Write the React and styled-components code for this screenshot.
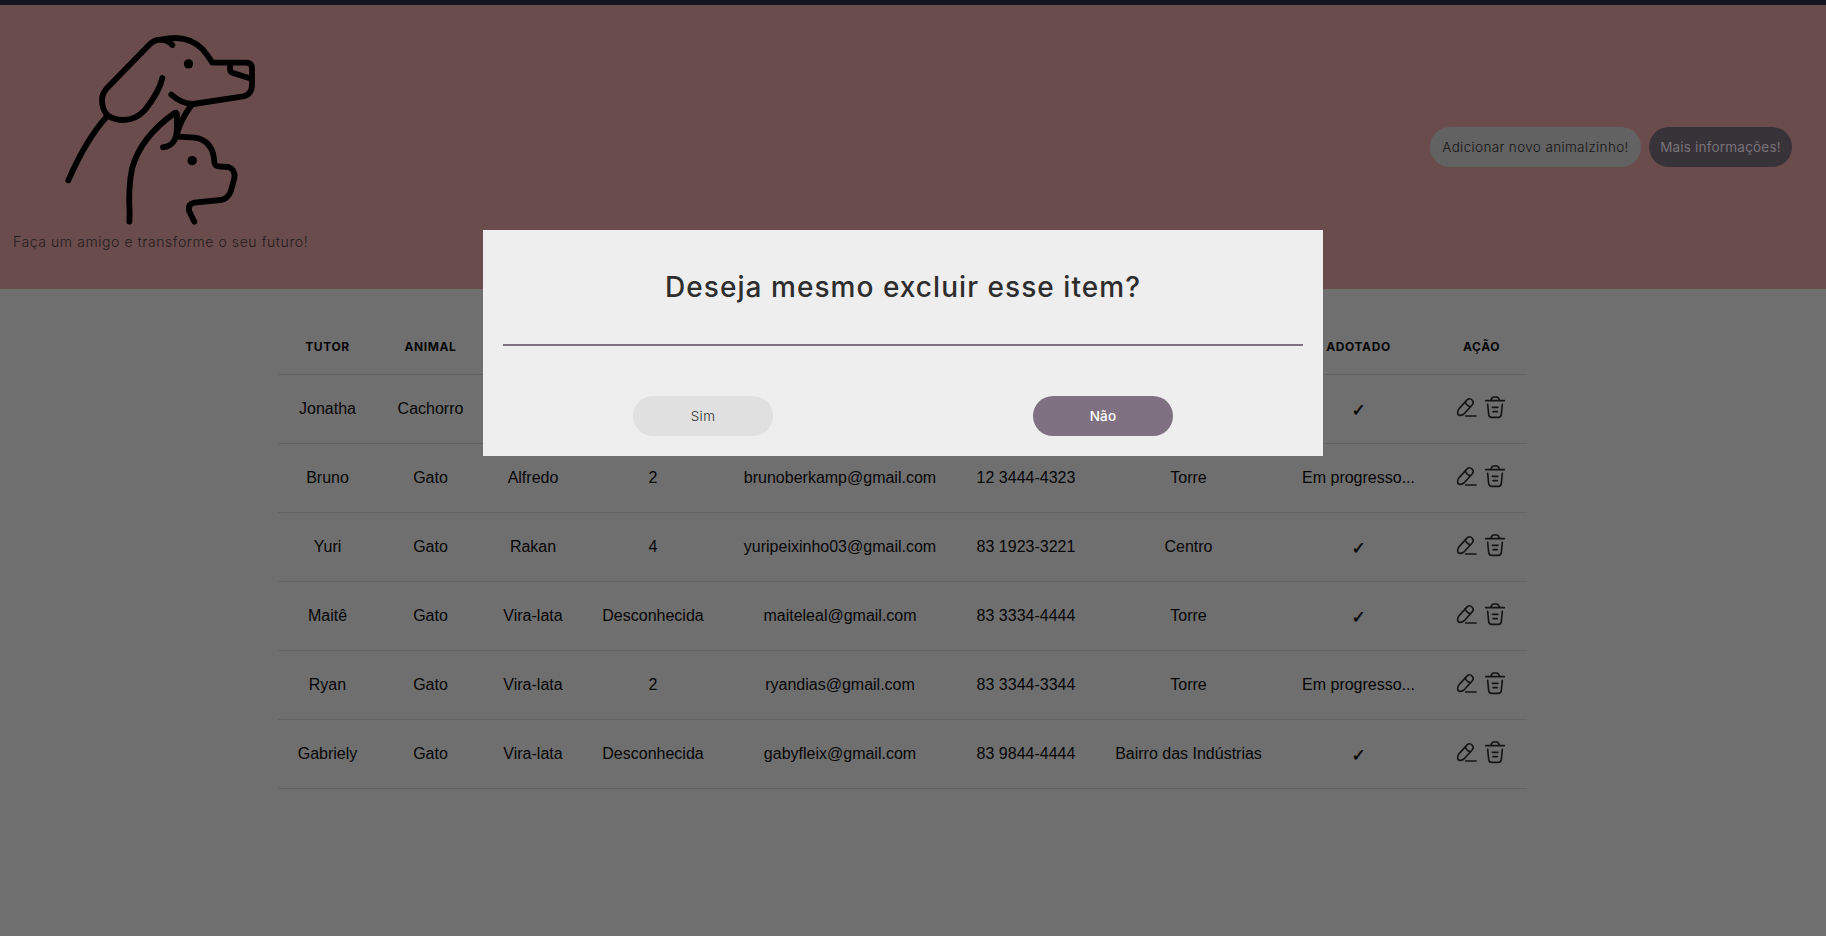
import React from "react";
import styled, { createGlobalStyle } from "styled-components";

const GlobalStyle = createGlobalStyle`
  * { box-sizing: border-box; }
  body { margin: 0; background: #6f6f6f; overflow: hidden; }
`;

const display = `Inter, "Liberation Sans", sans-serif`;

const Page = styled.div`
  min-height: 936px;
  background: #6f6f6f;
  border-top: 5px solid #141320;
`;

const Header = styled.header`
  display: flex;
  align-items: center;
  justify-content: space-between;
  height: 284px;
  padding: 0 34px 0 13px;
  background: #6b4c4c;
`;

const Brand = styled.div`
  align-self: flex-start;
  display: flex;
  flex-direction: column;
  padding-top: 25px;
`;

const Logo = styled.svg`
  width: 213px;
  height: 200px;
  margin-left: 37px;
  fill: none;
  stroke: #000;
  stroke-width: 17.5;
  stroke-linecap: round;
  stroke-linejoin: round;
`;

const Slogan = styled.p`
  margin: 2px 0 0;
  font: 300 14px/20px ${display};
  letter-spacing: 0.57px;
  color: #241b1d;
  white-space: nowrap;
`;

const HeaderActions = styled.div`
  display: flex;
  gap: 8px;
`;

const Button = styled.button`
  width: ${(p) => p.$width}px;
  height: 40px;
  padding: 0;
  border: 0;
  border-radius: 20px;
  background: ${(p) => p.$bg};
  color: ${(p) => p.$color};
  font: ${(p) => p.$weight || 400} 13.5px/40px ${display};
  letter-spacing: ${(p) => p.$spacing || 0}px;
  white-space: nowrap;
`;

const Table = styled.table`
  width: 1249px;
  margin: 31px 0 0 278px;
  table-layout: fixed;
  border-collapse: separate;
  border-spacing: 0;
`;

const HeadCell = styled.th`
  height: 55px;
  padding: 0;
  border-bottom: 1px solid #636363;
  font: 700 12px/16px ${display};
  letter-spacing: 0.6px;
  color: #060606;
`;

const Cell = styled.td`
  height: 69px;
  padding: 0 0 1px;
  border-bottom: 1px solid #636363;
  text-align: center;
  white-space: nowrap;
  font: 16px/20px "Liberation Sans", Arial, sans-serif;
  color: #060606;
`;

const Check = styled.span`
  position: relative;
  top: 2px;
  font: 17px/20px "DejaVu Sans", sans-serif;
  -webkit-text-stroke: 0.5px #060606;
`;

const RowActions = styled.div`
  display: flex;
  justify-content: center;
  gap: 6px;
  padding: 0 2px 3px 0;
`;

const Icon = styled.svg`
  width: 22px;
  height: 24px;
  fill: none;
  stroke: #141414;
  stroke-width: 4.8;
  stroke-linecap: round;
  stroke-linejoin: round;
`;

const Modal = styled.section`
  position: fixed;
  top: 230px;
  left: 483px;
  width: 840px;
  height: 226px;
  padding: 0 20px 20px;
  background: #eeeeee;
`;

const ModalTitle = styled.h2`
  height: 116px;
  margin: 0;
  border-bottom: 2px solid #807182;
  font: 500 28px/114px ${display};
  letter-spacing: 1.05px;
  color: #2d2d2d;
  text-align: center;
  white-space: nowrap;
`;

const ModalActions = styled.div`
  display: flex;
  justify-content: space-around;
  padding-top: 50px;
`;

const widths = [99, 107, 98, 142, 232, 140, 185, 155, 91];
const headings = ["TUTOR", "ANIMAL", "", "", "", "", "", "ADOTADO", "AÇÃO"];
const rows = [
  ["Jonatha", "Cachorro", "", "", "", "", "", true],
  ["Bruno", "Gato", "Alfredo", "2", "brunoberkamp@gmail.com", "12 3444-4323", "Torre", false],
  ["Yuri", "Gato", "Rakan", "4", "yuripeixinho03@gmail.com", "83 1923-3221", "Centro", true],
  ["Maitê", "Gato", "Vira-lata", "Desconhecida", "maiteleal@gmail.com", "83 3334-4444", "Torre", true],
  ["Ryan", "Gato", "Vira-lata", "2", "ryandias@gmail.com", "83 3344-3344", "Torre", false],
  ["Gabriely", "Gato", "Vira-lata", "Desconhecida", "gabyfleix@gmail.com", "83 9844-4444", "Bairro das Indústrias", true],
];

const PetsLogo = () => (
  <Logo viewBox="150 90 639 600">
    <path d="M487 234Q478 275 435 330Q407 360 370 360Q345 360 325 348Q306 331 306 300Q306 280 322 263L450 132Q465 118 485 119Q505 122 517 135" />
    <path d="M485 119Q503 114 528 114Q575 115 608 148Q622 164 637 188H738Q756 188 756 205V258Q754 284 730 289L580 312Q545 312 514 284" />
    <path d="M690 190V207Q690 216 699 219L754 236" />
    <path d="M322 348Q260 415 205 541" />
    <path d="M576 314Q552 343 536 385L531 402" />
    <path d="M388 665L389 640Q384 560 397 502Q424 410 524 339Q531 336 531 345V385C530 420 518 438 489 442" />
    <path d="M531 410L585 413Q635 422 642 475Q642 499 654 499L685 501Q707 508 703 535L692 575Q682 598 662 600L583 608Q564 612 567 632L583 665" />
    <g fill="#000" stroke="none">
      <circle cx="565.5" cy="191.5" r="14" />
      <circle cx="576.5" cy="482" r="14" />
    </g>
  </Logo>
);

const PencilIcon = () => (
  <Icon viewBox="0 0 66 72">
    <path d="M34 14L10 40Q5 46 5 53Q5 61 12 61Q20 61 26 55L49 29Q55 22 48 15Q41 8 34 14Z" />
    <path d="M28 21Q31 32 43 35M29 63H60" />
  </Icon>
);

const TrashIcon = () => (
  <Icon viewBox="0 0 66 72">
    <path d="M5 17H61M20 16L24 9Q26 6 30 6H37Q41 6 43 9L47 16" />
    <path d="M11 28L14 58Q15 67 23 67H43Q51 67 52 58L55 28M25 37H42M27 50H40" />
  </Icon>
);

export default function App() {
  return (
    <>
      <GlobalStyle />
      <Page>
        <Header>
          <Brand>
            <PetsLogo />
            <Slogan>Faça um amigo e transforme o seu futuro!</Slogan>
          </Brand>
          <HeaderActions>
            <Button $width={211} $bg="#626262" $color="#141414" $weight={350} $spacing={0.36}>Adicionar novo animalzinho!</Button>
            <Button $width={143} $bg="#383239" $color="#777278" $spacing={0.2}>Mais informações!</Button>
          </HeaderActions>
        </Header>
        <Table>
          <colgroup>
            {widths.map((w, i) => <col key={i} width={w} />)}
          </colgroup>
          <thead>
            <tr>{headings.map((h, i) => <HeadCell key={i}>{h}</HeadCell>)}</tr>
          </thead>
          <tbody>
            {rows.map((row) => (
              <tr key={row[0]}>
                {row.slice(0, 7).map((value, i) => <Cell key={i}>{value}</Cell>)}
                <Cell>{row[7] ? <Check>✓</Check> : "Em progresso..."}</Cell>
                <Cell>
                  <RowActions>
                    <PencilIcon />
                    <TrashIcon />
                  </RowActions>
                </Cell>
              </tr>
            ))}
          </tbody>
        </Table>
      </Page>
      <Modal>
        <ModalTitle>Deseja mesmo excluir esse item?</ModalTitle>
        <ModalActions>
          <Button $width={140} $bg="#e0e0e0" $color="#2d2d2d" $weight={350} $spacing={0.4}>Sim</Button>
          <Button $width={140} $bg="#807182" $color="#ffffff" $weight={500} $spacing={0.2}>Não</Button>
        </ModalActions>
      </Modal>
    </>
  );
}
